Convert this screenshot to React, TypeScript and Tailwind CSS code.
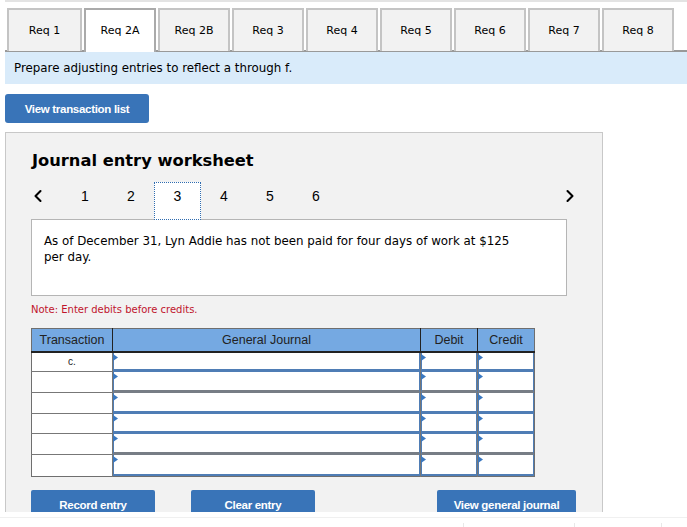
import React from "react"
import { ChevronLeft, ChevronRight } from "lucide-react"

const tabs = ["Req 1", "Req 2A", "Req 2B", "Req 3", "Req 4", "Req 5", "Req 6", "Req 7", "Req 8"]
const steps = [1, 2, 3, 4, 5, 6]
const rows = [
  { label: "c.", h: "h-[19px]", band: "border-b-[3px] border-b-[#4f7db5]" },
  { label: "", h: "h-[21px]", band: "border-b-[3px] border-b-[#777d85]" },
  { label: "", h: "h-[21px]", band: "border-b-[3px] border-b-[#4f7db5]" },
  { label: "", h: "h-[20px]", band: "border-b-[3px] border-b-[#4f7db5]" },
  { label: "", h: "h-[21px]", band: "border-b-[3px] border-b-[#777d85]" },
  { label: "", h: "h-[21px]", band: "border-b-2 border-b-[#4f7db5]" },
]

// ─── Journal input cell ─────────────────────────────────────────────────────

function EntryCell({ h, band }: { h: string; band: string }) {
  return (
    <td className="border-l border-[#777] p-0">
      <div className={`relative ${h} border-x border-x-[#4f7db5] bg-white ${band}`}>
        <svg className="absolute left-[-1px] top-[1px]" width="5" height="7" viewBox="0 0 5 7">
          <path d="M0 0 L5 3.5 L0 7 Z" fill="#3a78c0" />
        </svg>
      </div>
    </td>
  )
}

function ActionButton({ label, width }: { label: string; width: string }) {
  return (
    <button className={`${width} h-[30px] shrink-0 rounded-t-[2px] bg-[#3974b8] pt-[2px] font-['Liberation_Sans',sans-serif] text-[11.5px] font-bold tracking-[-0.3px] text-white`}>
      {label}
    </button>
  )
}

export default function App() {
  return (
    <div className="h-[527px] w-[687px] overflow-hidden bg-white font-['DejaVu_Sans',sans-serif] text-black">
      <div className="h-[512px] overflow-hidden pl-[5px]">
        <div className="h-[2px] bg-[#e3e3e3]" />

        {/* Requirement tabs */}
        <div className="mt-[6px] flex h-[44px] gap-[2px] border-b-2 border-[#999] pl-[2px]">
          {tabs.map((t, i) => (
            <div
              key={t}
              className={
                i === 1
                  ? "z-10 flex h-[44px] w-[72px] justify-center border-2 border-b-0 border-[#aaa] bg-white pt-[13px] text-[11px] leading-[16px]"
                  : i === 0
                    ? "flex h-[43px] w-[75px] justify-center border-2 border-b-0 border-[#c4c4c4] bg-[#f2f2f2] pt-[13px] text-[11px] leading-[16px]"
                    : "flex h-[43px] w-[72px] justify-center border-2 border-b-0 border-[#c4c4c4] bg-[#f2f2f2] pt-[13px] text-[11px] leading-[16px]"
              }
            >
              {t}
            </div>
          ))}
        </div>

        <div className="flex h-[32px] items-center bg-[#d9ebfa] pl-[9px] pt-[1px] text-[11.85px]">
          Prepare adjusting entries to reflect a through f.
        </div>

        <button className="mt-[10px] block h-[29px] w-[144px] rounded-[3px] bg-[#3974b8] pt-[2px] font-['Liberation_Sans',sans-serif] text-[11.5px] font-bold tracking-[-0.3px] text-white">
          View transaction list
        </button>

        {/* Worksheet panel */}
        <div className="mt-[9px] w-[598px] border border-[#c8c8c8] bg-[#f2f2f2] px-[25px] pb-8 pt-[17px]">
          <h2 className="pl-[1px] text-[16.3px] font-bold leading-[22px]">Journal entry worksheet</h2>

          <div className="relative z-10 mt-[10px] flex h-[38px] w-[536px] items-start font-['Liberation_Sans',sans-serif] text-[14px]">
            <ChevronLeft className="ml-[-3px] mt-[4px] h-[20px] w-[20px] shrink-0" strokeWidth={2.5} />
            <div className="ml-[14px] flex">
              {steps.map((n) => (
                <div
                  key={n}
                  className={
                    n === 3
                      ? "flex h-[38px] w-[47px] justify-center border border-dotted border-[#2f6cb0] bg-white pt-[3px]"
                      : "flex h-[38px] w-[46px] justify-center pt-[4px]"
                  }
                >
                  {n}
                </div>
              ))}
            </div>
            <ChevronRight className="ml-auto mr-[-13px] mt-[4px] h-[20px] w-[20px] shrink-0" strokeWidth={2.5} />
          </div>

          <div className="-mt-px h-[77px] w-[536px] border border-[#b5b5b5] bg-white pl-[12px] pr-[50px] pt-[13px] text-[11.85px] leading-[16px]">
            As of December 31, Lyn Addie has not been paid for four days of work at $125 per day.
          </div>

          <p className="mt-[8px] text-[10px] leading-[12px] text-[#c0142c]">Note: Enter debits before credits.</p>

          {/* General journal table */}
          <table className="mt-[12px] w-[503px] table-fixed border-collapse border border-[#6f6f6f] font-['Liberation_Sans',sans-serif]">
            <colgroup>
              <col className="w-[81px]" />
              <col className="w-[308px]" />
              <col className="w-[57px]" />
              <col className="w-[57px]" />
            </colgroup>
            <thead>
              <tr className="h-[23px] bg-[#75a9e2] text-[12.5px] text-[#222]">
                <th className="border-b-2 border-r border-[#222] p-0 pt-[2px] font-normal">Transaction</th>
                <th className="border-b-2 border-r border-[#222] p-0 pt-[2px] font-normal">General Journal</th>
                <th className="border-b-2 border-r border-[#222] p-0 pt-[2px] font-normal">Debit</th>
                <th className="border-b-2 border-[#222] p-0 pt-[2px] font-normal">Credit</th>
              </tr>
            </thead>
            <tbody>
              {rows.map((r, i) => (
                <tr key={i} className={r.h}>
                  <td className={i === 0 ? "bg-white p-0 text-center align-middle text-[10px] text-[#222]" : "border-t border-[#777] bg-white p-0"}>
                    {r.label}
                  </td>
                  <EntryCell h={r.h} band={r.band} />
                  <EntryCell h={r.h} band={r.band} />
                  <EntryCell h={r.h} band={r.band} />
                </tr>
              ))}
            </tbody>
          </table>

          <div className="mt-[13px] flex w-[545px]">
            <ActionButton label="Record entry" width="w-[124px]" />
            <ActionButton label="Clear entry" width="ml-[36px] w-[124px]" />
            <ActionButton label="View general journal" width="ml-auto w-[139px]" />
          </div>
        </div>
      </div>

      {/* Cut-off row under the page */}
      <div className="mt-[5px] flex h-[10px] border-t border-[#f0f0f0]">
        <div className="ml-[463px] mt-[5px] h-[5px] w-px bg-[#e8e8e8]" />
        <div className="ml-[110px] mt-[5px] h-[5px] w-px bg-[#e8e8e8]" />
        <div className="ml-[86px] mt-[5px] h-[5px] w-px bg-[#e8e8e8]" />
      </div>
    </div>
  )
}
